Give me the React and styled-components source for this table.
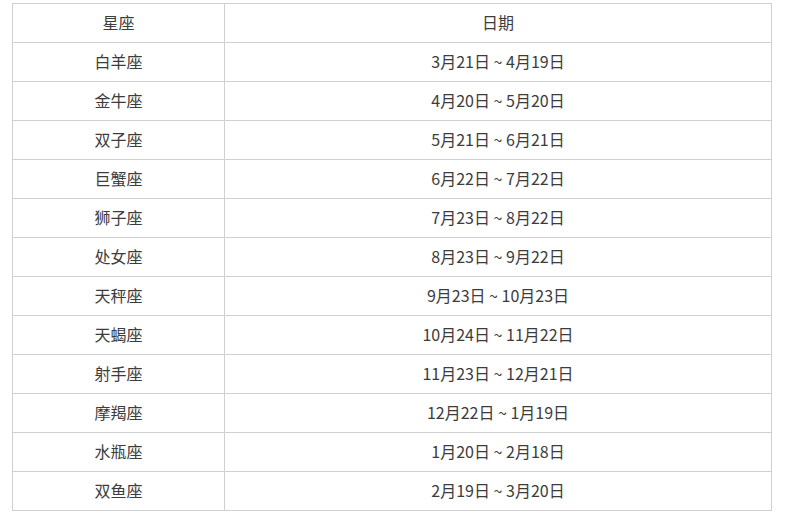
import React from "react";
import styled, { createGlobalStyle } from "styled-components";

const Global = createGlobalStyle`
  html, body { margin: 0; padding: 0; background: #fff; }
  body { font-family: "Noto Sans CJK SC", "Noto Sans", sans-serif; }
`;

const Page = styled.div`
  padding: 3px 13px 0 12px;
`;

const Table = styled.table`
  width: 760px;
  border-collapse: collapse;
  table-layout: fixed;
  color: #3c3c3c;
  font-size: 16px;
`;

const Cell = styled.td`
  border: 1px solid #d0d0d0;
  height: 36px;
  padding: 0 0 2px;
  text-align: center;
  vertical-align: middle;
  line-height: 20px;
  width: ${(p) => (p.$narrow ? "211px" : "auto")};
`;

const HeadCell = styled(Cell).attrs({ as: "th" })`
  font-weight: normal;
`;

const rows = [
  ["白羊座", "3月21日 ~ 4月19日"],
  ["金牛座", "4月20日 ~ 5月20日"],
  ["双子座", "5月21日 ~ 6月21日"],
  ["巨蟹座", "6月22日 ~ 7月22日"],
  ["狮子座", "7月23日 ~ 8月22日"],
  ["处女座", "8月23日 ~ 9月22日"],
  ["天秤座", "9月23日 ~ 10月23日"],
  ["天蝎座", "10月24日 ~ 11月22日"],
  ["射手座", "11月23日 ~ 12月21日"],
  ["摩羯座", "12月22日 ~ 1月19日"],
  ["水瓶座", "1月20日 ~ 2月18日"],
  ["双鱼座", "2月19日 ~ 3月20日"],
];

export default function App() {
  return (
    <Page>
      <Global />
      <Table>
        <thead>
          <tr>
            <HeadCell $narrow>星座</HeadCell>
            <HeadCell>日期</HeadCell>
          </tr>
        </thead>
        <tbody>
          {rows.map(([sign, date]) => (
            <tr key={sign}>
              <Cell $narrow>{sign}</Cell>
              <Cell>{date}</Cell>
            </tr>
          ))}
        </tbody>
      </Table>
    </Page>
  );
}
